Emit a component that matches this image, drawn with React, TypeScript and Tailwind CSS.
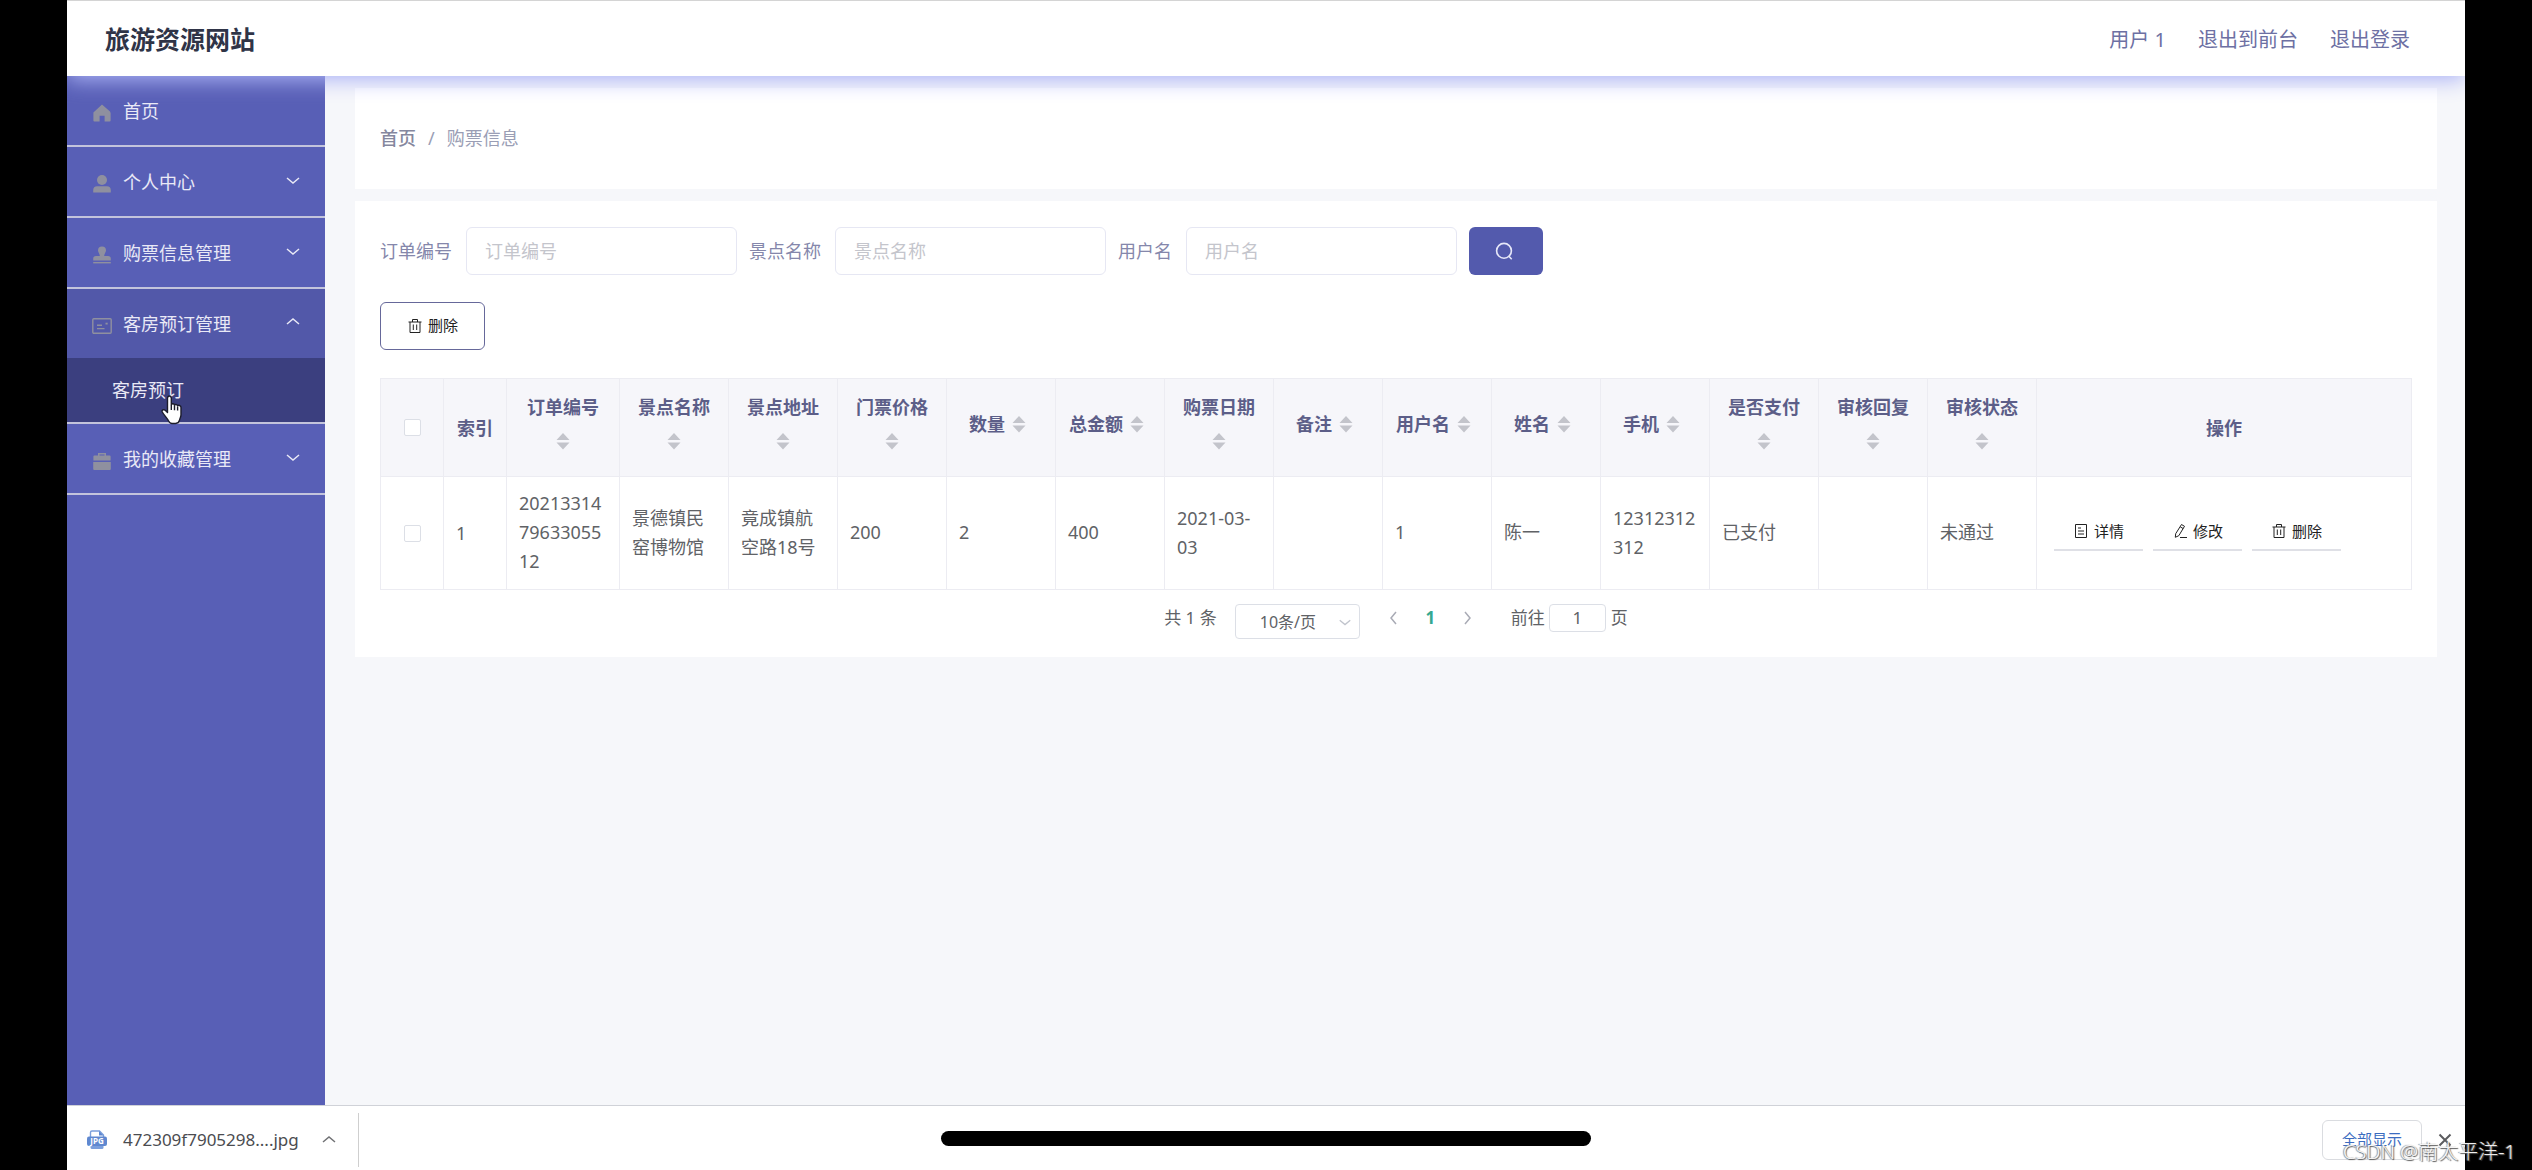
import type { ReactNode } from "react"

const iconBox = "h-5 w-5 shrink-0"

const HomeIcon = () => (
  <svg viewBox="0 0 20 20" className={iconBox} fill="currentColor">
    <path d="M10 1.6 18 8.6 18.6 10v7.4a1 1 0 0 1-1 1h-5v-5.6H7.6v5.6H2.4a1 1 0 0 1-1-1V9.4z" />
  </svg>
)

const UserIcon = () => (
  <svg viewBox="0 0 20 20" className={iconBox} fill="currentColor">
    <circle cx="10" cy="6" r="5" />
    <path d="M1.2 18.6v-2.4a4 4 0 0 1 4-4h9.6a4 4 0 0 1 4 4v2.4z" />
  </svg>
)

const StampIcon = () => (
  <svg viewBox="0 0 20 20" className={iconBox} fill="currentColor">
    <path d="M10 1.4a4 4 0 0 1 4 4c0 2-1.8 3-1.8 5.600H16a2.800 2.800 0 0 1 2.800 2.800v1.800H1.200v-1.800A2.800 2.800 0 0 1 4 11h3.800C7.800 8.400 6 7.400 6 5.400a4 4 0 0 1 4-4z" />
    <path d="M1.200 17h17.600v1.400H1.200z" />
  </svg>
)

const PostcardIcon = () => (
  <svg viewBox="0 0 20 20" className={iconBox} fill="none" stroke="currentColor" strokeWidth="1.400">
    <rect x=".8" y="2.800" width="18.400" height="14.400" rx="1" />
    <path d="M5 9.200h5M5 12.600h7.500" />
    <path d="M13.500 6.700h2.200v1.800h-2.200z" fill="currentColor" stroke="none" />
  </svg>
)

const CaseIcon = () => (
  <svg viewBox="0 0 20 20" className={iconBox} fill="currentColor">
    <path d="M6 4.600V2h8v2.600h3.600a1 1 0 0 1 1 1V9.400H1.400V5.600a1 1 0 0 1 1-1zm1.500 0h5V3.400h-5zM1.200 11h17.600v7a1 1 0 0 1-1 1H2.200a1 1 0 0 1-1-1z" />
  </svg>
)

const Chevron = ({ d, className }: { d: "up" | "down" | "left" | "right"; className?: string }) => {
  const paths = { up: "M2 10l6-5 6 5", down: "M2 6l6 5 6-5", left: "M10 2L5 8l5 6", right: "M6 2l5 6-5 6" }
  return (
    <svg viewBox="0 0 16 16" className={className} fill="none" stroke="currentColor" strokeWidth="1.500">
      <path d={paths[d]} />
    </svg>
  )
}

const TrashIcon = () => (
  <svg viewBox="0 0 16 16" className="h-4 w-4 shrink-0" fill="none" stroke="currentColor" strokeWidth="1">
    <path d="M1.500 4h13M5.500 4V1.500h5V4M3 4v10.500h10V4M6.300 6.500V12M9.700 6.500V12" />
  </svg>
)

const DetailIcon = () => (
  <svg viewBox="0 0 16 16" className="h-4 w-4 shrink-0" fill="none" stroke="currentColor" strokeWidth="1">
    <path d="M2.500 1.500h11v13h-11zM5 5h3M5 8h6M5 11h6" />
  </svg>
)

const EditIcon = () => (
  <svg viewBox="0 0 16 16" className="h-4 w-4 shrink-0" fill="none" stroke="currentColor" strokeWidth="1">
    <path d="M9.500 1.500l3 1.800-5.700 9.400-3.500 1.600.4-3.600zM8.200 3.800l3 1.800M8 14.500h7" />
  </svg>
)

const menu = [
  { icon: <HomeIcon />, title: "首页", arrow: null },
  { icon: <UserIcon />, title: "个人中心", arrow: "down" },
  { icon: <StampIcon />, title: "购票信息管理", arrow: "down" },
  { icon: <PostcardIcon />, title: "客房预订管理", arrow: "up", child: "客房预订" },
  { icon: <CaseIcon />, title: "我的收藏管理", arrow: "down" },
] as { icon: ReactNode; title: string; arrow: "up" | "down" | null; child?: string }[]

const filters = [
  { id: "order", label: "订单编号" },
  { id: "spot", label: "景点名称" },
  { id: "user", label: "用户名" },
]

const columns = [
  { title: "订单编号", value: "202133147963305512" },
  { title: "景点名称", value: "景德镇民窑博物馆" },
  { title: "景点地址", value: "竟成镇航空路18号" },
  { title: "门票价格", value: "200" },
  { title: "数量", value: "2" },
  { title: "总金额", value: "400" },
  { title: "购票日期", value: "2021-03-03" },
  { title: "备注", value: "" },
  { title: "用户名", value: "1" },
  { title: "姓名", value: "陈一" },
  { title: "手机", value: "12312312312" },
  { title: "是否支付", value: "已支付" },
  { title: "审核回复", value: "" },
  { title: "审核状态", value: "未通过" },
]

const actions = [
  { icon: <DetailIcon />, title: "详情" },
  { icon: <EditIcon />, title: "修改" },
  { icon: <TrashIcon />, title: "删除" },
]

const Checkbox = ({ label }: { label: string }) => (
  <input
    type="checkbox"
    aria-label={label}
    className="block mx-auto h-[17px] w-[17px] appearance-none rounded-xs border border-[#dcdfe6] bg-white"
  />
)

function Header() {
  return (
    <header className="relative z-10 flex h-[76px] items-center justify-between border-t border-[#d4d4d4] bg-white pl-[38px] pr-[55px] pt-[2px] shadow-[0_4px_20px_#acb3f6]">
      <h1 className="text-[25px] font-bold text-[#2f3447]">旅游资源网站</h1>
      <nav className="flex gap-8 text-xl text-[#6d70a3]">
        <span>用户 1</span>
        <a href="#front">退出到前台</a>
        <a href="#logout">退出登录</a>
      </nav>
    </header>
  )
}

function Sidebar() {
  return (
    <aside className="w-[258px] shrink-0 bg-[#585fb6] text-[#e9e9f6]">
      <ul>
        {menu.map((item) => (
          <li key={item.title} className="relative border-b-2 border-[#c3c4dc]">
            <button
              className={`flex h-[69px] w-full items-center pl-[25px] pr-6 text-left ${item.child ? "bg-[#5258a9]" : ""}`}
            >
              <span className="mt-1 text-[#8f909f]">{item.icon}</span>
              <span className="ml-[11px] flex-1">{item.title}</span>
              {item.arrow && <Chevron d={item.arrow} className="mb-1 h-4 w-4" />}
            </button>
            {item.child && (
              <a href="#room" className="flex h-16 items-center bg-[#3b3f7f] pl-[45px]">
                {item.child}
              </a>
            )}
            {item.child && (
              <svg
                viewBox="0 0 22 30"
                className="absolute bottom-[-3px] left-[94px] h-[30px] w-[22px]"
                fill="#fff"
                stroke="#1c1c2b"
                strokeWidth="1.400"
                strokeLinejoin="round"
              >
                <path d="M6.500 3.200c0-3 3.800-3 3.800 0v6.600c.5-1.500 3-1.300 3.200.4.600-1.200 2.900-1 3.100.7.700-1 3.400-.7 3.400 1.700v7.200c0 2.200-1 3.300-1.500 5.400-.5 2-1.500 3.300-4 3.300h-3.500c-2.300 0-3-1.600-3.900-3.300-1.600-3-4.200-5.200-5.800-8.200-.9-1.900 1.300-3 2.900-1.700l2.300 2.200z" />
                <path d="M10.300 10v5M13.500 10.600v4.600M16.600 11.400v4" fill="none" />
              </svg>
            )}
          </li>
        ))}
      </ul>
    </aside>
  )
}

function Sorter() {
  return (
    <svg viewBox="0 0 28 34" className="h-[34px] w-7" fill="#c3c4cb">
      <path d="M14 9 20.500 16h-13zM7.500 18.500h13L14 25.500z" />
    </svg>
  )
}

function OrderTable() {
  return (
    <table className="mt-7 w-full table-fixed border-collapse text-[#606266]">
      <colgroup>
        <col className="w-[63px]" />
        <col className="w-[63px]" />
        {columns.map((c, i) => (
          <col key={c.title} className={i === 0 ? "w-[113px]" : "w-[109px]"} />
        ))}
        <col />
      </colgroup>
      <thead>
        <tr className="h-[98px] bg-[#f6f6fa] text-[#5c5e88]">
          <th className="border border-[#ececf2]">
            <Checkbox label="全选" />
          </th>
          <th className="border border-[#ececf2] font-semibold">索引</th>
          {columns.map((c) => (
            <th key={c.title} className="border border-[#ececf2] px-2 pb-[7px] font-semibold">
              <div className="flex flex-wrap items-center justify-center leading-[34px]">
                {c.title}
                <Sorter />
              </div>
            </th>
          ))}
          <th className="border border-[#ececf2] font-semibold">操作</th>
        </tr>
      </thead>
      <tbody>
        <tr className="leading-[29px]">
          <td className="border border-[#ececf2]">
            <Checkbox label="选择" />
          </td>
          <td className="border border-[#ececf2] pl-3">1</td>
          {columns.map((c) => (
            <td key={c.title} className="border border-[#ececf2] pb-[13px] pl-3 pr-[13px] pt-3 break-all">
              {c.value}
            </td>
          ))}
          <td className="border border-[#ececf2] pl-[17px]">
            <div className="flex gap-[10px]">
              {actions.map((a) => (
                <button
                  key={a.title}
                  className="flex h-9 items-center gap-[5px] border-b-2 border-[#dfe0e6] px-[19px] pb-[2px] text-[15px] text-[#222]"
                >
                  {a.icon}
                  {a.title}
                </button>
              ))}
            </div>
          </td>
        </tr>
      </tbody>
    </table>
  )
}

function Pagination() {
  return (
    <div className="mt-[14px] flex items-start justify-center text-[17px] leading-7 text-[#606266]">
      <span>共 1 条</span>
      <div className="relative ml-[18px]">
        <select
          aria-label="每页条数"
          className="h-[35px] w-[125px] appearance-none rounded-sm border border-[#dcdfe6] bg-white pl-6 text-base"
        >
          <option>10条/页</option>
        </select>
        <Chevron d="down" className="pointer-events-none absolute right-2 top-[11px] h-[14px] w-[14px] text-[#c0c4cc]" />
      </div>
      <button aria-label="上一页" className="ml-[26px] flex h-7 items-center text-[#a9abb5]">
        <Chevron d="left" className="h-4 w-4" />
      </button>
      <button className="w-[57px] font-bold text-[#35a891]">1</button>
      <button aria-label="下一页" className="flex h-7 items-center text-[#a9abb5]">
        <Chevron d="right" className="h-4 w-4" />
      </button>
      <label htmlFor="page" className="ml-9">
        前往
      </label>
      <input
        id="page"
        defaultValue="1"
        className="ml-1 mr-[5px] h-7 w-[57px] rounded-sm border border-[#dcdfe6] text-center"
      />
      <span>页</span>
    </div>
  )
}

function DownloadBar() {
  return (
    <footer className="relative flex h-[65px] items-center border-t border-[#d0d2d8] bg-white pl-5 pr-[13px] pt-1">
      <svg viewBox="0 0 20 20" className="h-5 w-5">
        <path d="M3.500 8V2.500a1.500 1.500 0 0 1 1.500-1.500h7.500l4 4v3" fill="#fff" stroke="#7b9fdc" strokeWidth="1.400" />
        <path d="M12 1v4.500h4.500z" fill="#5f88d0" />
        <path d="M3.500 14v3.500A1.500 1.500 0 0 0 5 19h10a1.500 1.500 0 0 0 1.500-1.500V14" fill="#7b9fdc" />
        <rect y="6.500" width="20" height="9.500" rx="2" fill="#5f88d0" />
        <text x="10" y="14.200" textAnchor="middle" fontSize="8" fontWeight="700" fill="#fff">
          JPG
        </text>
      </svg>
      <span className="ml-4 text-[17px] text-[#4b4c50]">472309f7905298....jpg</span>
      <button aria-label="更多" className="ml-[22px] text-[#707174]">
        <Chevron d="up" className="h-4 w-4" />
      </button>
      <span className="ml-[21px] h-[54px] border-l border-[#cfcfcf]" />
      <button className="ml-auto h-10 w-[100px] rounded-md border border-[#dadce0] text-[15px] text-[#3b6cc0]">
        全部显示
      </button>
      <button aria-label="关闭" className="ml-4 text-[#5b5c5f]">
        <svg viewBox="0 0 14 14" className="h-[14px] w-[14px]" stroke="currentColor" strokeWidth="2">
          <path d="M1.500 1.500l11 11M12.500 1.500l-11 11" />
        </svg>
      </button>
      <div className="absolute left-1/2 top-[25px] h-[15px] w-[650px] -translate-x-1/2 rounded-full bg-black" />
    </footer>
  )
}

export default function App() {
  return (
    <div className="relative min-h-screen bg-black px-[67px] font-['Noto_Sans','Noto_Sans_CJK_SC',sans-serif] text-lg">
      <div className="flex min-h-screen flex-col overflow-hidden bg-[#f6f7fa]">
        <Header />
        <div className="flex flex-1">
          <Sidebar />
          <main className="min-w-0 flex-1 pl-[30px] pr-7 pt-3">
            <nav className="h-[101px] bg-white px-[25px] pt-9 text-[#9a9eb5]">
              <a href="#home" className="font-medium text-[#85879e]">
                首页
              </a>
              <span className="mx-3">/</span>
              <span>购票信息</span>
            </nav>
            <section className="mt-3 bg-white px-[25px] pb-[18px] pt-[26px]">
              <form className="flex items-center gap-3">
                {filters.map((f) => (
                  <div key={f.id} className="flex items-center gap-[14px]">
                    <label htmlFor={f.id} className="text-[#8587ab]">
                      {f.label}
                    </label>
                    <input
                      id={f.id}
                      placeholder={f.label}
                      className="h-12 w-[271px] rounded-md border border-[#e6e7f3] px-[18px] placeholder:text-[#c4c5cc]"
                    />
                  </div>
                ))}
                <button
                  type="button"
                  aria-label="查询"
                  className="flex h-12 w-[74px] items-center justify-center rounded-md bg-[#535aad] text-[#e6e7f8]"
                >
                  <svg viewBox="0 0 18 18" className="mr-1 h-[18px] w-[18px]" fill="none" stroke="currentColor" strokeWidth="1.600">
                    <circle cx="9" cy="8.800" r="7.400" />
                    <path d="M13.500 13.800l3.200 3.400" />
                  </svg>
                </button>
              </form>
              <button className="mt-[27px] flex h-12 items-center gap-[5px] rounded-md border border-[#66689a] px-[26px] text-[15px] text-[#222]">
                <TrashIcon />
                删除
              </button>
              <OrderTable />
              <Pagination />
            </section>
          </main>
        </div>
        <DownloadBar />
      </div>
      <div className="absolute bottom-1 right-4 z-20 text-xl font-light text-white/90 [text-shadow:1px_1px_1px_#555,-1px_0_1px_#888]">
        CSDN @南太平洋-1
      </div>
    </div>
  )
}
